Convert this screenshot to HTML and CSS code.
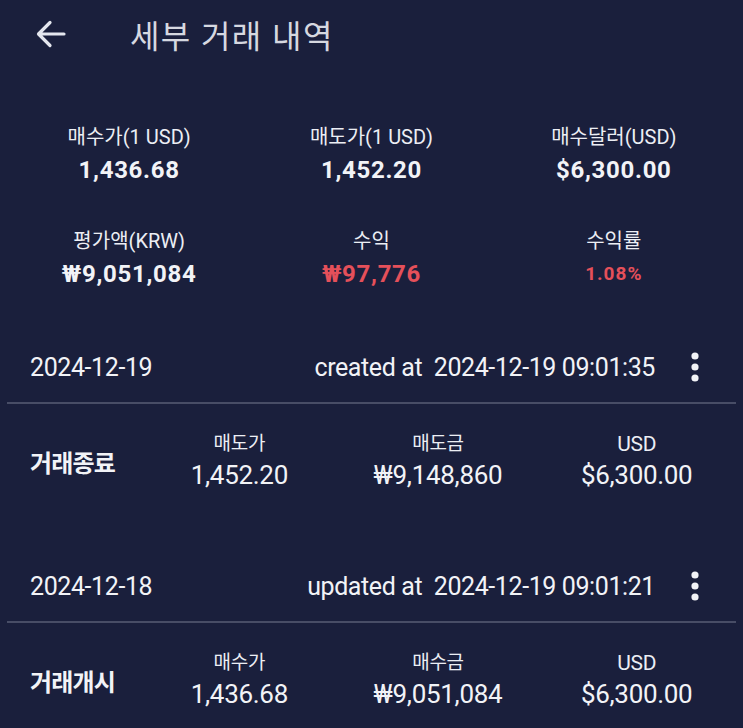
FILE: index.html
```html
<!DOCTYPE html>
<html lang="ko">
<head>
    <meta charset="UTF-8">
    <meta name="viewport" content="width=device-width, initial-scale=1.0">
    <title>세부 거래 내역</title>
    <link rel="stylesheet" href="styles.css">
</head>
<body>
    <header class="topbar">
        <svg class="back" width="30" height="28" viewBox="0 0 30 28" aria-hidden="true">
            <path d="M28 14H3M14 2.5L2.5 14L14 25.5" fill="none" stroke="#e4e6ee" stroke-width="3.2" stroke-linecap="round" stroke-linejoin="round"/>
        </svg>
        <h1>세부 거래 내역</h1>
    </header>

    <section class="summary">
        <div class="cell">
            <div class="label">매수가(1 USD)</div>
            <div class="value">1,436.68</div>
        </div>
        <div class="cell">
            <div class="label">매도가(1 USD)</div>
            <div class="value">1,452.20</div>
        </div>
        <div class="cell">
            <div class="label">매수달러(USD)</div>
            <div class="value">$6,300.00</div>
        </div>
        <div class="cell">
            <div class="label">평가액(KRW)</div>
            <div class="value">₩9,051,084</div>
        </div>
        <div class="cell">
            <div class="label">수익</div>
            <div class="value red">₩97,776</div>
        </div>
        <div class="cell">
            <div class="label">수익률</div>
            <div class="value red small">1.08%</div>
        </div>
    </section>

    <section class="trades">
        <div class="trade">
            <div class="trade-head">
                <span class="date">2024-12-19</span>
                <span class="stamp">created at&nbsp; 2024-12-19 09:01:35</span>
                <svg class="kebab" width="24" height="32" viewBox="0 0 24 32" aria-hidden="true">
                    <circle cx="12" cy="5" r="3.6" fill="#f2f3f7"/>
                    <circle cx="12" cy="16" r="3.6" fill="#f2f3f7"/>
                    <circle cx="12" cy="27" r="3.6" fill="#f2f3f7"/>
                </svg>
            </div>
            <div class="trade-body">
                <div class="kind">거래종료</div>
                <div class="col">
                    <div class="col-label">매도가</div>
                    <div class="col-value">1,452.20</div>
                </div>
                <div class="col">
                    <div class="col-label">매도금</div>
                    <div class="col-value">₩9,148,860</div>
                </div>
                <div class="col">
                    <div class="col-label latin">USD</div>
                    <div class="col-value">$6,300.00</div>
                </div>
            </div>
        </div>

        <div class="trade">
            <div class="trade-head">
                <span class="date">2024-12-18</span>
                <span class="stamp">updated at&nbsp; 2024-12-19 09:01:21</span>
                <svg class="kebab" width="24" height="32" viewBox="0 0 24 32" aria-hidden="true">
                    <circle cx="12" cy="5" r="3.6" fill="#f2f3f7"/>
                    <circle cx="12" cy="16" r="3.6" fill="#f2f3f7"/>
                    <circle cx="12" cy="27" r="3.6" fill="#f2f3f7"/>
                </svg>
            </div>
            <div class="trade-body">
                <div class="kind">거래개시</div>
                <div class="col">
                    <div class="col-label">매수가</div>
                    <div class="col-value">1,436.68</div>
                </div>
                <div class="col">
                    <div class="col-label">매수금</div>
                    <div class="col-value">₩9,051,084</div>
                </div>
                <div class="col">
                    <div class="col-label latin">USD</div>
                    <div class="col-value">$6,300.00</div>
                </div>
            </div>
        </div>
    </section>
</body>
</html>
```

FILE: styles.css
```css
body {
    margin: 0;
    background-color: #1a1f3c;
    color: #f2f3f7;
    font-family: Roboto, "Noto Sans CJK KR", sans-serif;
    height: 728px;
    overflow: hidden;
}

/* top bar */
.topbar {
    height: 68px;
    display: flex;
    align-items: center;
    padding-left: 36px;
}
.back {
    display: block;
}
.topbar h1 {
    margin: 0 0 0 64px;
    font-size: 32px;
    font-weight: 400;
    color: #d6d8e0;
    letter-spacing: 1.4px;
}

/* summary grid */
.summary {
    display: grid;
    grid-template-columns: repeat(3, 1fr);
    row-gap: 39px;
    margin-top: 54px;
    padding: 0 8px;
    text-align: center;
}
.label {
    font-size: 20px;
    line-height: 30px;
    color: #eceef4;
}
.value {
    margin-top: 1px;
    font-size: 24px;
    line-height: 34px;
    font-weight: 700;
    letter-spacing: 0.7px;
}
.red {
    color: #e5505a;
}
.small {
    font-size: 19px;
    letter-spacing: 1px;
}

/* trade list */
.trade {
    margin: 48px 7px 0;
    padding-bottom: 18px;
}
.trade-head {
    box-sizing: content-box;
    height: 56px;
    display: flex;
    align-items: center;
    padding: 0 29px 7px 23px;
    border-bottom: 2px solid #484d66;
    font-size: 25px;
    letter-spacing: -0.4px;
}
.date {
    flex: 1;
}
.stamp {
    margin-right: 28px;
}
.kebab {
    display: block;
}
.trade-body {
    display: grid;
    grid-template-columns: 110px repeat(3, 1fr);
    align-items: center;
    padding: 26px 0 0 23px;
    text-align: center;
}
.kind {
    text-align: left;
    font-size: 24px;
    font-weight: 700;
    letter-spacing: -0.8px;
}
.col-label {
    font-size: 19px;
    line-height: 28px;
    color: #eceef4;
    letter-spacing: -0.3px;
}
.col-label.latin {
    font-size: 21px;
}
.col-value {
    font-size: 26px;
    line-height: 34px;
    letter-spacing: -0.3px;
}
```
